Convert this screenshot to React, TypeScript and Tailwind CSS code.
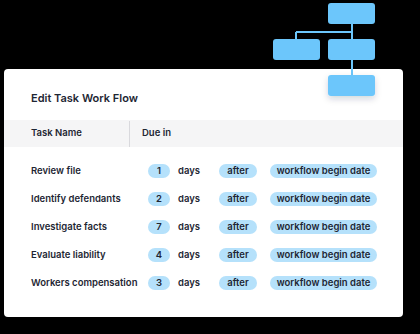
import React from 'react';

const rows = [
  { name: 'Review file', days: 1 },
  { name: 'Identify defendants', days: 2 },
  { name: 'Investigate facts', days: 7 },
  { name: 'Evaluate liability', days: 4 },
  { name: 'Workers compensation', days: 3 },
];

const pill = 'flex h-[14px] items-center justify-center rounded-full bg-[#b5e1fb]';

const FlowDiagram: React.FC = () => (
  <svg className="pointer-events-none absolute left-0 top-0 z-10" width="420" height="110" viewBox="0 0 420 110">
    <defs>
      <filter id="sh" x="-40%" y="-40%" width="180%" height="200%">
        <feDropShadow dx="0" dy="3" stdDeviation="3" floodColor="#0f2a4a" floodOpacity="0.18" />
      </filter>
    </defs>
    <g stroke="#6cc6fb" strokeWidth="2" fill="none">
      <path d="M352 24 V39" />
      <path d="M296 32 H352" />
      <path d="M296 32 V39" />
      <path d="M352 60 V75" />
    </g>
    <g fill="#6cc6fb">
      <rect x="328" y="3" width="47" height="21" rx="3" />
      <rect x="273" y="39" width="47" height="21" rx="3" />
      <rect x="328" y="39" width="47" height="21" rx="3" />
      <rect x="328" y="75" width="47" height="21" rx="3" filter="url(#sh)" />
    </g>
  </svg>
);

export default function App() {
  return (
    <div
      className="relative h-[334px] w-[420px] overflow-hidden bg-black text-[#1f2937]"
      style={{ fontFamily: 'Inter, "Noto Sans", sans-serif' }}
    >
      <FlowDiagram />
      <div className="ml-[4px] mt-[69px] h-[248px] w-[399px] rounded-[4px] bg-white">
        <div className="flex h-[51px] items-end pb-[14px] pl-[27px] text-[11px] font-semibold text-[#1e2633]">
          Edit Task Work Flow
        </div>
        <div className="flex h-[27px] items-center bg-[#f5f5f6] text-[9.5px] font-semibold text-[#1e2633]">
          <div className="w-[125px] pl-[27px]">Task Name</div>
          <div className="h-[26px] w-px bg-[#d9d9dd]" />
          <div className="pl-[12px]">Due in</div>
        </div>
        <div className="flex flex-col pt-[10px] text-[9.5px] font-semibold text-[#1e2633]">
          {rows.map((r) => (
            <div key={r.name} className="flex h-[28px] items-center pl-[27px]">
              <div className="w-[117px]">{r.name}</div>
              <div className="w-[30px]">
                <div className={`${pill} w-[22px]`}>{r.days}</div>
              </div>
              <div className="w-[41px]">days</div>
              <div className="w-[51px]">
                <div className={`${pill} w-[38px]`}>after</div>
              </div>
              <div className={`${pill} w-[107px]`}>workflow begin date</div>
            </div>
          ))}
        </div>
      </div>
    </div>
  );
}
